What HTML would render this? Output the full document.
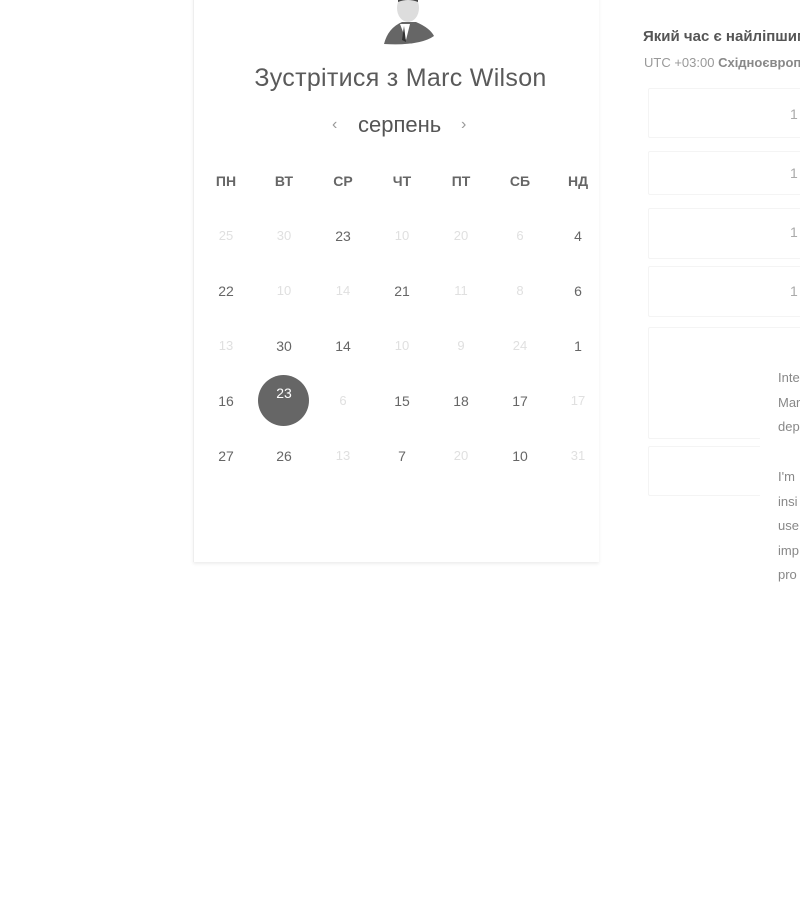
<!DOCTYPE html>
<html style="overflow:hidden"><head><meta charset="utf-8"><style>
html,body{margin:0;width:800px;height:900px;overflow:hidden}
body{background:#fff;position:relative;font-family:"Liberation Sans",sans-serif;color:#555}
.a{position:absolute}
.card{left:193px;top:-10px;width:405px;height:572px;border-left:1px solid #eee;box-shadow:0 2px 3px rgba(0,0,0,0.07);background:#fff}
.d{position:absolute;width:40px;margin-left:-20px;text-align:center;font-size:14px;color:#666}
.f{color:#e0e0e0;font-size:13px}
.h{font-weight:bold;font-size:14px;color:#666}
.slot{position:absolute;left:648px;width:152px;border:1px solid #f4f4f4;border-right:none;border-radius:2px 0 0 2px;background:#fff}
.st{position:absolute;left:790px;font-size:14px;color:#aaa}
.txt{position:absolute;left:778px;font-size:13px;color:#888;line-height:24.5px}
</style></head><body>
<div class="a card"></div>
<svg class="a" style="left:380px;top:0" width="56" height="46" viewBox="0 0 56 46">
<path d="M4 44 Q8 28 22 22 L36 22 Q50 28 54 36 Q40 46 4 44Z" fill="#666"/>
<path d="M20 24 L26 40 L30 24Z" fill="#fff"/>
<path d="M24 26 L22 40 L26 42Z" fill="#333"/>
<ellipse cx="28" cy="8" rx="11" ry="14" fill="#ddd"/>
<path d="M18 2 Q28 -2 38 2 L38 -2 L18 -2Z" fill="#444"/>
</svg>
<div class="a" style="left:193px;width:415px;top:64px;text-align:center;font-size:25px;color:#5a5a5a;letter-spacing:0.3px">Зустрітися з Marc Wilson</div>
<div class="a" style="left:332px;top:116px;font-size:16px;color:#999">‹</div>
<div class="a" style="left:358px;top:112px;font-size:22px;color:#555">серпень</div>
<div class="a" style="left:461px;top:116px;font-size:16px;color:#999">›</div>
<div class="a" style="left:258px;top:375px;width:51px;height:51px;border-radius:50%;background:#666"></div>
<div id="cal"></div>
<div class="a" style="left:643px;top:28px;font-size:15px;font-weight:bold;color:#555;white-space:nowrap;width:157px;overflow:hidden">Який час є найліпшим</div>
<div class="a" style="left:644px;top:55px;font-size:13px;color:#999;white-space:nowrap;width:156px;overflow:hidden">UTC +03:00 <b style="color:#888">Східноєвропейський</b></div>
<div class="slot" style="top:88px;height:48px"></div><div class="st" style="top:106px">1</div>
<div class="slot" style="top:151px;height:42px"></div><div class="st" style="top:165px">1</div>
<div class="slot" style="top:208px;height:49px"></div><div class="st" style="top:224px">1</div>
<div class="slot" style="top:266px;height:49px"></div><div class="st" style="top:283px">1</div>
<div class="slot" style="top:327px;height:110px"></div>
<div class="slot" style="top:446px;height:48px"></div>
<div class="a" style="left:760px;top:335px;width:40px;height:230px;background:#fff"></div>
<div class="txt" style="top:366px">Inte<br>Mar<br>dep</div>
<div class="txt" style="top:465px">I'm<br>insi<br>use<br>imp<br>pro</div>
<script>
var xs=[226,284,343,402,461,520,578],ys=[236,291,346,401,456];
var hd=["ПН","ВТ","СР","ЧТ","ПТ","СБ","НД"];
var rows=[["25f","30f","23","10f","20f","6f","4"],["22","10f","14f","21","11f","8f","6"],["13f","30","14","10f","9f","24f","1"],["16","23s","6f","15","18","17","17f"],["27","26","13f","7","20f","10","31f"]];
var h="";
hd.forEach(function(t,i){h+='<div class="d h" style="left:'+xs[i]+'px;top:173px">'+t+'</div>'});
rows.forEach(function(r,j){r.forEach(function(c,i){var f=c.indexOf("f")>0,s=c.indexOf("s")>0,n=c.replace(/[fs]/,"");
h+='<div class="d'+(f?' f':'')+'" style="left:'+xs[i]+'px;top:'+(ys[j]-(s?16:8))+'px;'+(s?'color:#fff;':'')+'">'+n+'</div>'})});
document.getElementById("cal").innerHTML=h;
</script>
</body></html>
